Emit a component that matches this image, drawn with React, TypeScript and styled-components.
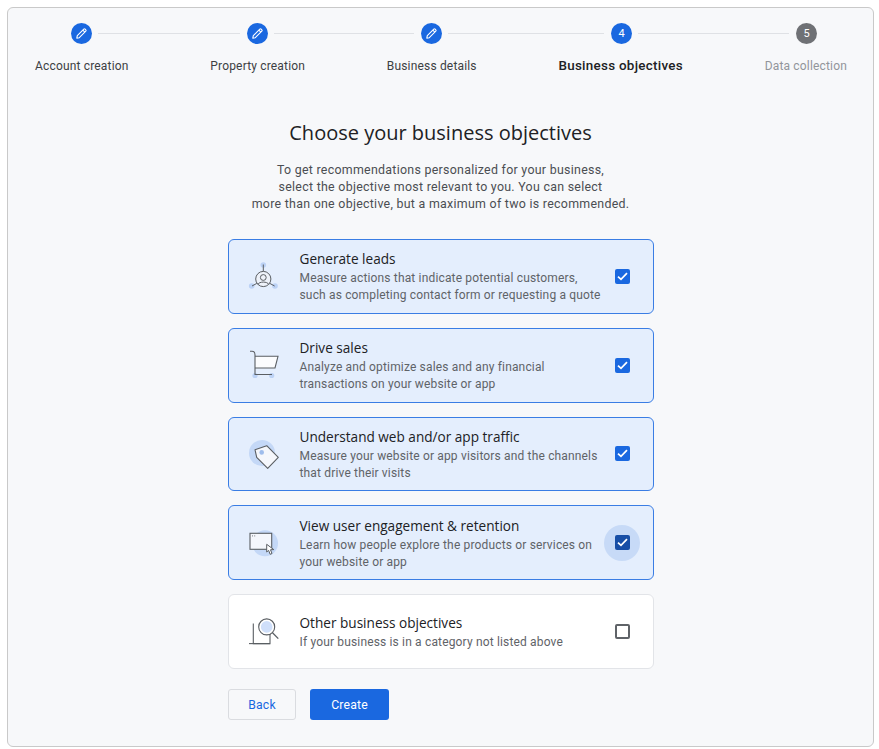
import React from "react";
import styled, { createGlobalStyle } from "styled-components";

const Global = createGlobalStyle`
  html, body { margin: 0; padding: 0; background: #fff; }
  body { font-family: Roboto, "Liberation Sans", sans-serif; color: #202124; }
`;

const Page = styled.div`
  width: 879px;
  height: 749px;
  padding: 7px 5px 2px 7px;
  box-sizing: border-box;
`;

const Panel = styled.main`
  height: 740px;
  box-sizing: border-box;
  background: #f7f8fa;
  border: 1px solid #c9c9c9;
  border-radius: 6px;
  padding-top: 15px;
  display: flex;
  flex-direction: column;
`;

const Track = styled.div`
  display: flex;
  align-items: center;
  height: 21px;
  padding-left: 63px;
`;

const Dot = styled.div<{ $tone: "blue" | "grey" }>`
  width: 21px;
  height: 21px;
  flex: none;
  border-radius: 50%;
  background: ${(p) => (p.$tone === "blue" ? "#1a68e0" : "#6f7175")};
  color: #fff;
  font-size: 11px;
  display: flex;
  align-items: center;
  justify-content: center;
`;

const Connector = styled.div<{ $w: number }>`
  width: ${(p) => p.$w}px;
  height: 1px;
  margin: 0 7px 0 6px;
  background: #dfe1e5;
  flex: none;
`;

const Labels = styled.div`
  display: flex;
  justify-content: space-between;
  align-items: baseline;
  margin-top: 14px;
  padding: 0 26px 0 27px;
  height: 16px;
`;

const StepLabel = styled.div<{ $state: "done" | "active" | "todo" }>`
  font-size: ${(p) => (p.$state === "active" ? "13.4px" : "12px")};
  font-weight: ${(p) => (p.$state === "active" ? 500 : 400)};
  letter-spacing: ${(p) => (p.$state === "active" ? "0.28px" : "0.17px")};
  color: ${(p) => (p.$state === "todo" ? "#92959a" : p.$state === "active" ? "#202124" : "#3c4043")};
  white-space: nowrap;
`;

const Title = styled.h1`
  margin: 46px 0 0;
  font-family: "Open Sans", Roboto, sans-serif;
  font-size: 20px;
  line-height: 26px;
  font-weight: 400;
  color: #202124;
  text-align: center;
`;

const Lead = styled.p`
  margin: 15px 0 0;
  font-size: 12.4px;
  line-height: 17px;
  letter-spacing: 0.28px;
  color: #4b4e52;
  text-align: center;
`;

const Column = styled.div`
  width: 426px;
  margin: 27px 0 0 220px;
  display: flex;
  flex-direction: column;
  gap: 14px;
`;

const Card = styled.div<{ $on: boolean }>`
  height: 74.75px;
  box-sizing: border-box;
  border: 1px solid ${(p) => (p.$on ? "#3a7de4" : "#e2e4e8")};
  border-radius: 6px;
  background: ${(p) => (p.$on ? "#e4eefd" : "#fff")};
  display: flex;
  align-items: center;
  padding-left: 18px;
`;

const IconSlot = styled.div`
  width: 36px;
  height: 36px;
  flex: none;
  margin-right: 16.5px;
`;

const Body = styled.div`
  flex: 1;
  min-width: 0;
  padding-top: 2px;
`;

const CardTitle = styled.div`
  font-family: "Open Sans", Roboto, sans-serif;
  font-size: 13.6px;
  line-height: 18px;
  font-weight: 500;
  color: #202124;
`;

const CardText = styled.div`
  font-size: 12px;
  line-height: 17px;
  letter-spacing: 0.16px;
  color: #5f6368;
  white-space: pre-line;
  margin-top: 2px;
`;

const CheckWrap = styled.div<{ $halo: boolean }>`
  width: 36px;
  height: 36px;
  flex: none;
  margin-right: 13px;
  border-radius: 50%;
  background: ${(p) => (p.$halo ? "#c7daf7" : "transparent")};
  display: flex;
  align-items: center;
  justify-content: center;
`;

const Box = styled.div<{ $on: boolean; $dark: boolean }>`
  width: 15px;
  height: 15px;
  box-sizing: border-box;
  border-radius: 2px;
  border: ${(p) => (p.$on ? "none" : "2px solid #5f6368")};
  background: ${(p) => (p.$on ? (p.$dark ? "#174ea6" : "#1a68e0") : "#fff")};
  display: flex;
  align-items: center;
  justify-content: center;
`;

const Actions = styled.div`
  display: flex;
  gap: 14px;
  margin-top: 6px;
`;

const Back = styled.button`
  width: 68px;
  height: 31px;
  border: 1px solid #dadce0;
  border-radius: 3px;
  background: transparent;
  color: #1a68e0;
  font: 400 12.2px Roboto, sans-serif;
  letter-spacing: 0.2px;
  padding: 1px 0 0;
`;

const Create = styled.button`
  width: 79px;
  height: 31px;
  border: none;
  border-radius: 3px;
  background: #1a68e0;
  color: #fff;
  font: 400 12.2px Roboto, sans-serif;
  letter-spacing: 0.2px;
  padding: 1px 0 0;
`;

const Pencil = () => (
  <svg width="13" height="13" viewBox="0 0 13 13" fill="none" stroke="#fff" strokeWidth="1.1" strokeLinejoin="round">
    <path d="M1.8 11.2 L2.3 8.7 L8.8 2.2 a1 1 0 0 1 1.4 0 l0.6 0.6 a1 1 0 0 1 0 1.4 L4.3 10.7 Z" />
    <path d="M7.8 3.2 L9.8 5.2" />
  </svg>
);

const Check = () => (
  <svg width="11" height="9" viewBox="0 0 11 9" fill="none" stroke="#fff" strokeWidth="1.7">
    <path d="M1 4.6 L4 7.4 L10 1.2" />
  </svg>
);

const Line = "#5a5e63";
const Soft = "#bcd2f5";

const LeadsIcon = () => (
  <svg width="36" height="36" viewBox="0 0 36 36" fill="none">
    <circle cx="16.3" cy="7" r="2.8" fill={Soft} />
    <circle cx="4.7" cy="28" r="2.8" fill={Soft} />
    <circle cx="28" cy="28" r="2.8" fill={Soft} />
    <circle cx="16.3" cy="21" r="7.6" fill="#eef2fa" stroke={Line} strokeWidth="1" />
    <circle cx="16.3" cy="19.5" r="2.9" stroke={Line} strokeWidth="1" />
    <path d="M10.8 26.4 C12.3 23.3 20.3 23.3 21.8 26.4" stroke={Line} strokeWidth="1" />
    <path d="M16.3 6.5 V13.2 M5 28 L9.8 25.4 M27.6 28 L22.8 25.4" stroke={Line} strokeWidth="1" />
  </svg>
);

const CartIcon = () => (
  <svg width="36" height="36" viewBox="0 0 36 36" fill="none">
    <circle cx="8" cy="28.5" r="2.6" fill={Soft} />
    <circle cx="24.7" cy="28.5" r="2.6" fill={Soft} />
    <path d="M8 9.3 H31 L28 21 H8 Z" fill="#fbfcfe" />
    <path d="M3 4.3 H5 Q8 4.3 8 8 V27.5 H25" stroke={Line} strokeWidth="1.1" />
    <path d="M8 9.3 H31 L28 21 H8" stroke={Line} strokeWidth="1.1" />
  </svg>
);

const TagIcon = () => (
  <svg width="36" height="36" viewBox="0 0 36 36" fill="none">
    <circle cx="15" cy="17" r="13" fill={Soft} opacity="0.8" />
    <path d="M8 13.7 L19.7 9.7 L31.3 21.4 L20.7 32.4 L9.7 21.4 Z" fill="#f5f7fc" stroke={Line} strokeWidth="1.1" strokeLinejoin="round" />
    <circle cx="14.7" cy="16.4" r="2.3" fill="#9fbdec" />
  </svg>
);

const WindowIcon = () => (
  <svg width="36" height="36" viewBox="0 0 36 36" fill="none">
    <circle cx="18" cy="18.3" r="13" fill={Soft} opacity="0.8" />
    <rect x="3" y="8.3" width="21.7" height="16" fill="#f5f7fc" stroke={Line} strokeWidth="1.1" />
    <path d="M5 10.9 H6 M7.2 10.9 H8.2" stroke={Line} strokeWidth="0.8" />
    <path d="M19.7 19.3 V27 L21.6 25.4 L23.2 29.3 L25 28.5 L23.5 24.8 L26.8 24.6 Z" fill="#fff" stroke={Line} strokeWidth="1" strokeLinejoin="round" />
  </svg>
);

const SearchIcon = () => (
  <svg width="36" height="36" viewBox="0 0 36 36" fill="none">
    <path d="M6.3 10.5 V30.6 H23 V21" stroke={Line} strokeWidth="1.1" />
    <path d="M2 30.6 H23" stroke={Line} strokeWidth="1.1" />
    <circle cx="19.7" cy="13.9" r="8" fill="#fff" stroke={Line} strokeWidth="1.1" />
    <circle cx="19.7" cy="13.9" r="5.8" fill="#cfdffa" />
    <path d="M25.5 19.8 L31.3 25.6" stroke={Line} strokeWidth="1.3" />
  </svg>
);

const goals = [
  { t: "Generate leads", d: "Measure actions that indicate potential customers,\nsuch as completing contact form or requesting a quote", on: true, I: LeadsIcon },
  { t: "Drive sales", d: "Analyze and optimize sales and any financial\ntransactions on your website or app", on: true, I: CartIcon },
  { t: "Understand web and/or app traffic", d: "Measure your website or app visitors and the channels\nthat drive their visits", on: true, I: TagIcon },
  { t: "View user engagement & retention", d: "Learn how people explore the products or services on\nyour website or app", on: true, halo: true, I: WindowIcon },
  { t: "Other business objectives", d: "If your business is in a category not listed above", on: false, I: SearchIcon },
];

const steps: { label: string; state: "done" | "active" | "todo" }[] = [
  { label: "Account creation", state: "done" },
  { label: "Property creation", state: "done" },
  { label: "Business details", state: "done" },
  { label: "Business objectives", state: "active" },
  { label: "Data collection", state: "todo" },
];

const lineWidths = [142, 140, 156, 151];

export default function App() {
  return (
    <Page>
      <Global />
      <Panel>
        <Track>
          {steps.map((s, i) => (
            <React.Fragment key={s.label}>
              <Dot $tone={s.state === "todo" ? "grey" : "blue"}>
                {s.state === "done" ? <Pencil /> : i + 1}
              </Dot>
              {i < 4 && <Connector $w={lineWidths[i]} />}
            </React.Fragment>
          ))}
        </Track>
        <Labels>
          {steps.map((s) => (
            <StepLabel key={s.label} $state={s.state}>{s.label}</StepLabel>
          ))}
        </Labels>
        <Title>Choose your business objectives</Title>
        <Lead>
          To get recommendations personalized for your business,
          <br />
          select the objective most relevant to you. You can select
          <br />
          more than one objective, but a maximum of two is recommended.
        </Lead>
        <Column>
          {goals.map((g) => (
            <Card key={g.t} $on={g.on}>
              <IconSlot><g.I /></IconSlot>
              <Body>
                <CardTitle>{g.t}</CardTitle>
                <CardText>{g.d}</CardText>
              </Body>
              <CheckWrap $halo={!!g.halo}>
                <Box $on={g.on} $dark={!!g.halo}>{g.on && <Check />}</Box>
              </CheckWrap>
            </Card>
          ))}
          <Actions>
            <Back>Back</Back>
            <Create>Create</Create>
          </Actions>
        </Column>
      </Panel>
    </Page>
  );
}
